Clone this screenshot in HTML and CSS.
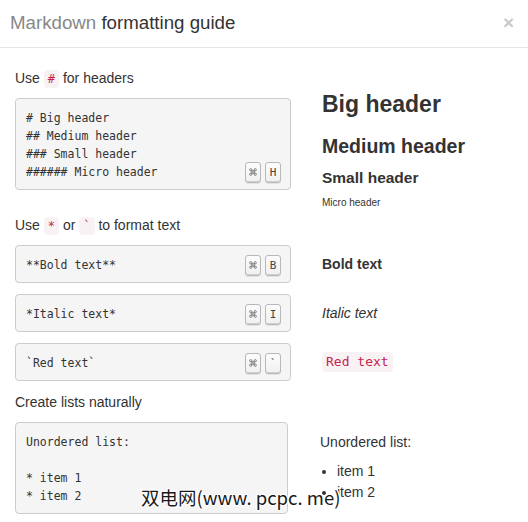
FILE: index.html
```html
<!DOCTYPE html>
<html>
<head>
<meta charset="utf-8">
<link rel="stylesheet" href="styles.css">
</head>
<body>
<div class="modal">
  <header class="modal-head">
    <h1 class="title"><span class="muted">Markdown</span> formatting guide</h1>
    <span class="close">×</span>
  </header>
  <div class="guide">
    <section class="sec sec-headers">
      <div class="left">
        <p class="label">Use <code class="tok">#</code> for headers</p>
        <div class="src src-multi"><pre class="code"># Big header
## Medium header
### Small header
###### Micro header</pre><span class="keys"><kbd class="key cmd"><svg class="cmd-icon" viewBox="0 0 10 10"><path d="M3.6 3.6V2.2A1.4 1.4 0 1 0 2.2 3.6H7.8A1.4 1.4 0 1 0 6.4 2.2V7.8A1.4 1.4 0 1 0 7.8 6.4H2.2A1.4 1.4 0 1 0 3.6 7.8Z"/></svg></kbd><kbd class="key">H</kbd></span></div>
      </div>
      <div class="out headers">
        <h2 class="h-big">Big header</h2>
        <h3 class="h-med">Medium header</h3>
        <h4 class="h-small">Small header</h4>
        <h6 class="h-micro">Micro header</h6>
      </div>
    </section>

    <section class="sec sec-format">
      <p class="label span">Use <code class="tok">*</code> or <code class="tok">`</code> to format text</p>
      <div class="src"><pre class="code">**Bold text**</pre><span class="keys"><kbd class="key cmd"><svg class="cmd-icon" viewBox="0 0 10 10"><path d="M3.6 3.6V2.2A1.4 1.4 0 1 0 2.2 3.6H7.8A1.4 1.4 0 1 0 6.4 2.2V7.8A1.4 1.4 0 1 0 7.8 6.4H2.2A1.4 1.4 0 1 0 3.6 7.8Z"/></svg></kbd><kbd class="key">B</kbd></span></div>
      <div class="out"><strong class="bold">Bold text</strong></div>
      <div class="src"><pre class="code">*Italic text*</pre><span class="keys"><kbd class="key cmd"><svg class="cmd-icon" viewBox="0 0 10 10"><path d="M3.6 3.6V2.2A1.4 1.4 0 1 0 2.2 3.6H7.8A1.4 1.4 0 1 0 6.4 2.2V7.8A1.4 1.4 0 1 0 7.8 6.4H2.2A1.4 1.4 0 1 0 3.6 7.8Z"/></svg></kbd><kbd class="key">I</kbd></span></div>
      <div class="out"><em class="italic">Italic text</em></div>
      <div class="src"><pre class="code">`Red text`</pre><span class="keys"><kbd class="key cmd"><svg class="cmd-icon" viewBox="0 0 10 10"><path d="M3.6 3.6V2.2A1.4 1.4 0 1 0 2.2 3.6H7.8A1.4 1.4 0 1 0 6.4 2.2V7.8A1.4 1.4 0 1 0 7.8 6.4H2.2A1.4 1.4 0 1 0 3.6 7.8Z"/></svg></kbd><kbd class="key">`</kbd></span></div>
      <div class="out"><code class="red">Red text</code></div>
    </section>

    <section class="sec sec-lists">
      <p class="label span">Create lists naturally</p>
      <div class="src src-multi"><pre class="code">Unordered list:

* item 1
* item 2</pre></div>
      <div class="out list-out">
        <p class="list-title">Unordered list:</p>
        <ul class="list">
          <li>item 1</li>
          <li>item 2</li>
        </ul>
      </div>
    </section>
  </div>
  <div class="watermark">双电网(www. pcpc. me)</div>
</div>
</body>
</html>
```

FILE: styles.css
```css
* { box-sizing: border-box; }

html, body {
  margin: 0;
  padding: 0;
  background: #fff;
}

body {
  font-family: "Liberation Sans", Arial, Helvetica, sans-serif;
  color: #333;
  font-size: 14px;
}

.modal {
  position: relative;
  width: 528px;
  height: 522px;
  overflow: hidden;
}

.modal-head {
  display: flex;
  justify-content: space-between;
  align-items: flex-start;
  padding: 12px 14px 14px 10px;
  border-bottom: 1px solid #e5e5e5;
  height: 48px;
}

.title {
  margin: 0;
  font-size: 18.7px;
  font-weight: normal;
  line-height: 21px;
  color: #333;
}

.muted { color: #888; }

.close {
  font-size: 19px;
  font-weight: bold;
  line-height: 1;
  color: #cacaca;
  margin-top: 1px;
}

.guide {
  padding: 19px 0 0 15px;
}

.sec {
  display: grid;
  grid-template-columns: 276px 1fr;
  column-gap: 31px;
  align-items: center;
}

.sec-headers { align-items: start; }

.sec-format {
  margin-top: 5px;
  row-gap: 11px;
}

.sec-lists {
  margin-top: 10px;
  row-gap: 11px;
  grid-template-columns: 273px 1fr;
  column-gap: 32px;
  align-items: start;
}

.label {
  margin: 0;
  padding-top: 1px;
  line-height: 20px;
  height: 20px;
}

.span { grid-column: 1 / -1; }

.left .label { margin-bottom: 11px; }

.tok {
  font-family: "DejaVu Sans Mono", "Liberation Mono", monospace;
  font-size: 12px;
  color: #c7254e;
  background: #f9f2f4;
  border-radius: 4px;
  padding: 2px 4px;
}

.src {
  display: flex;
  justify-content: space-between;
  align-items: flex-end;
  background: #f5f5f5;
  border: 1px solid #ccc;
  border-radius: 4px;
  padding: 10px 9px 8px 10px;
}

.code {
  margin: 0;
  font-family: "DejaVu Sans Mono", "Liberation Mono", monospace;
  font-size: 11.5px;
  line-height: 18px;
  color: #333;
  white-space: pre;
}

.keys {
  display: flex;
  gap: 4px;
  height: 18px;
  align-items: center;
}

.key {
  display: inline-flex;
  align-items: center;
  justify-content: center;
  width: 16px;
  height: 21px;
  border: 1px solid #b8b8b8;
  border-radius: 3px;
  background: linear-gradient(#fcfcfc, #f0f0f0);
  box-shadow: inset 0 -1px 0 #d0d0d0, 0 1px 0 #e4e4e4;
  font-family: "DejaVu Sans Mono", "Liberation Mono", monospace;
  font-size: 11px;
  color: #444;
  line-height: 1;
}

.cmd-icon {
  width: 8px;
  height: 8px;
  fill: none;
  stroke: #666;
  stroke-width: 1;
}

.out { color: #333; }

.headers {
  padding-top: 24px;
}

.headers h2, .headers h3, .headers h4, .headers h6 {
  margin: 0;
  font-weight: bold;
  color: #333;
}

.h-big {
  font-size: 23px;
  line-height: 26px;
}

.h-med {
  font-size: 19.5px;
  line-height: 22px;
  margin-top: 18px !important;
}

.h-small {
  font-size: 15.5px;
  line-height: 18px;
  margin-top: 12px !important;
}

.h-micro {
  font-size: 10px;
  line-height: 12px;
  font-weight: normal !important;
  margin-top: 10px !important;
}

.bold {
  font-weight: bold;
  font-size: 14px;
}

.italic {
  font-style: italic;
  font-size: 14px;
}

.red {
  display: inline-block;
  font-family: "DejaVu Sans Mono", "Liberation Mono", monospace;
  font-size: 13px;
  line-height: 16px;
  color: #c7254e;
  background: #f9f2f4;
  border-radius: 4px;
  padding: 2px 4px;
}

.list-out {
  padding-top: 10px;
}

.list-title {
  margin: 0 0 9px;
  line-height: 20px;
}

.list {
  margin: 0;
  padding-left: 17px;
}

.list li {
  line-height: 21px;
}

.watermark {
  position: absolute;
  left: 141px;
  top: 484px;
  font-family: "Noto Sans CJK SC", "DejaVu Sans", sans-serif;
  font-size: 18.5px;
  line-height: 26px;
  color: #1a1a1a;
  text-shadow: 1px 0 0 #fff, -1px 0 0 #fff, 0 1px 0 #fff, 0 -1px 0 #fff,
    1px 1px 0 #fff, -1px -1px 0 #fff, 1px -1px 0 #fff, -1px 1px 0 #fff;
  white-space: nowrap;
}
```
